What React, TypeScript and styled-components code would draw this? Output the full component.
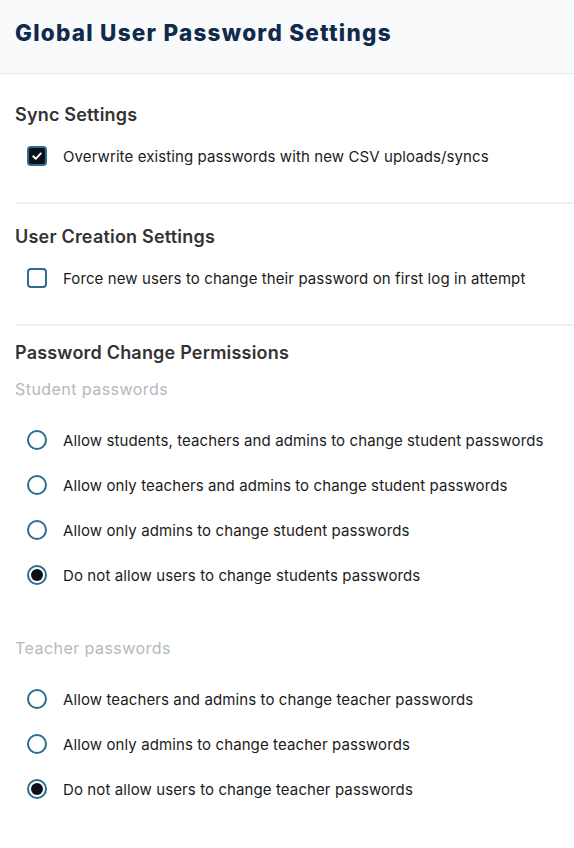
import React from 'react';
import styled, { createGlobalStyle } from 'styled-components';

const GlobalStyle = createGlobalStyle`
  html, body { margin: 0; padding: 0; background: #ffffff; }
  body {
    font-family: Inter, "Open Sans", "Liberation Sans", sans-serif;
    -webkit-font-smoothing: antialiased;
  }
  * { box-sizing: border-box; }
`;

const Page = styled.div`
  width: 574px;
  min-height: 848px;
  background: #ffffff;
`;

const Header = styled.header`
  height: 74px;
  background: #f8fafc;
  border-bottom: 1px solid #e7e9ec;
  display: flex;
  align-items: center;
  padding: 0 15px 7px;
`;

const Title = styled.h1`
  margin: 0;
  font-size: 22.5px;
  font-weight: 800;
  color: #102a4a;
  line-height: 28px;
  letter-spacing: 1.25px;
`;

const Body = styled.main`
  padding-left: 15px;
`;

const Section = styled.section<{ $top: number; $bottom: number; $divider?: boolean }>`
  padding-top: ${(p) => p.$top}px;
  padding-bottom: ${(p) => p.$bottom}px;
  border-bottom: ${(p) => (p.$divider ? '2px solid #efefef' : 'none')};
  display: flex;
  flex-direction: column;
`;

const Heading = styled.h2`
  margin: 0;
  font-size: 18px;
  font-weight: 600;
  line-height: 24px;
  color: #333333;
  letter-spacing: 0.2px;
`;

const SubHeading = styled.h3<{ $top: number }>`
  margin: ${(p) => p.$top}px 0 0;
  font-size: 16px;
  font-weight: 400;
  line-height: 24px;
  color: #b3b9be;
  letter-spacing: 0.45px;
`;

const OptionList = styled.div<{ $top: number }>`
  margin-top: ${(p) => p.$top}px;
  display: flex;
  flex-direction: column;
  gap: 21px;
`;

const Row = styled.label`
  display: flex;
  align-items: center;
  gap: 16px;
  padding-left: 12px;
  height: 24px;
  font-size: 15px;
  letter-spacing: 0.1px;
  color: #1b1b1b;
  cursor: pointer;
`;

const CheckBox = styled.span<{ $checked?: boolean }>`
  width: 20px;
  height: 20px;
  flex: none;
  border-radius: 4px;
  border: 2px solid #2d6b93;
  background: ${(p) => (p.$checked ? '#0d1117' : '#ffffff')};
  display: flex;
  align-items: center;
  justify-content: center;
`;

const Radio = styled.span<{ $checked?: boolean }>`
  width: 20px;
  height: 20px;
  flex: none;
  border-radius: 50%;
  border: 2px solid #2d6b93;
  background: #ffffff;
  display: flex;
  align-items: center;
  justify-content: center;
  &::after {
    content: '';
    width: 12px;
    height: 12px;
    border-radius: 50%;
    background: ${(p) => (p.$checked ? '#0d1117' : 'transparent')};
  }
`;

const Check = () => (
  <svg width="12" height="12" viewBox="0 0 12 12" fill="none">
    <path d="M2.2 6.3 L4.8 8.8 L9.8 3.4" stroke="#ffffff" strokeWidth="1.9" strokeLinecap="round" strokeLinejoin="round" />
  </svg>
);

const CheckOption = ({ checked, label }: { checked?: boolean; label: string }) => (
  <Row>
    <CheckBox $checked={checked}>{checked && <Check />}</CheckBox>
    {label}
  </Row>
);

const RadioOption = ({ checked, label }: { checked?: boolean; label: string }) => (
  <Row>
    <Radio $checked={checked} />
    {label}
  </Row>
);

const studentOptions = [
  'Allow students, teachers and admins to change student passwords',
  'Allow only teachers and admins to change student passwords',
  'Allow only admins to change student passwords',
  'Do not allow users to change students passwords',
];

const teacherOptions = [
  'Allow teachers and admins to change teacher passwords',
  'Allow only admins to change teacher passwords',
  'Do not allow users to change teacher passwords',
];

export default function App() {
  return (
    <Page>
      <GlobalStyle />
      <Header>
        <Title>Global User Password Settings</Title>
      </Header>
      <Body>
        <Section $top={29} $bottom={34} $divider>
          <Heading>Sync Settings</Heading>
          <OptionList $top={17}>
            <CheckOption checked label="Overwrite existing passwords with new CSV uploads/syncs" />
          </OptionList>
        </Section>
        <Section $top={21} $bottom={34} $divider>
          <Heading>User Creation Settings</Heading>
          <OptionList $top={17}>
            <CheckOption label="Force new users to change their password on first log in attempt" />
          </OptionList>
        </Section>
        <Section $top={15} $bottom={40}>
          <Heading>Password Change Permissions</Heading>
          <SubHeading $top={12}>Student passwords</SubHeading>
          <OptionList $top={27}>
            {studentOptions.map((o, i) => (
              <RadioOption key={o} label={o} checked={i === studentOptions.length - 1} />
            ))}
          </OptionList>
          <SubHeading $top={49}>Teacher passwords</SubHeading>
          <OptionList $top={27}>
            {teacherOptions.map((o, i) => (
              <RadioOption key={o} label={o} checked={i === teacherOptions.length - 1} />
            ))}
          </OptionList>
        </Section>
      </Body>
    </Page>
  );
}
